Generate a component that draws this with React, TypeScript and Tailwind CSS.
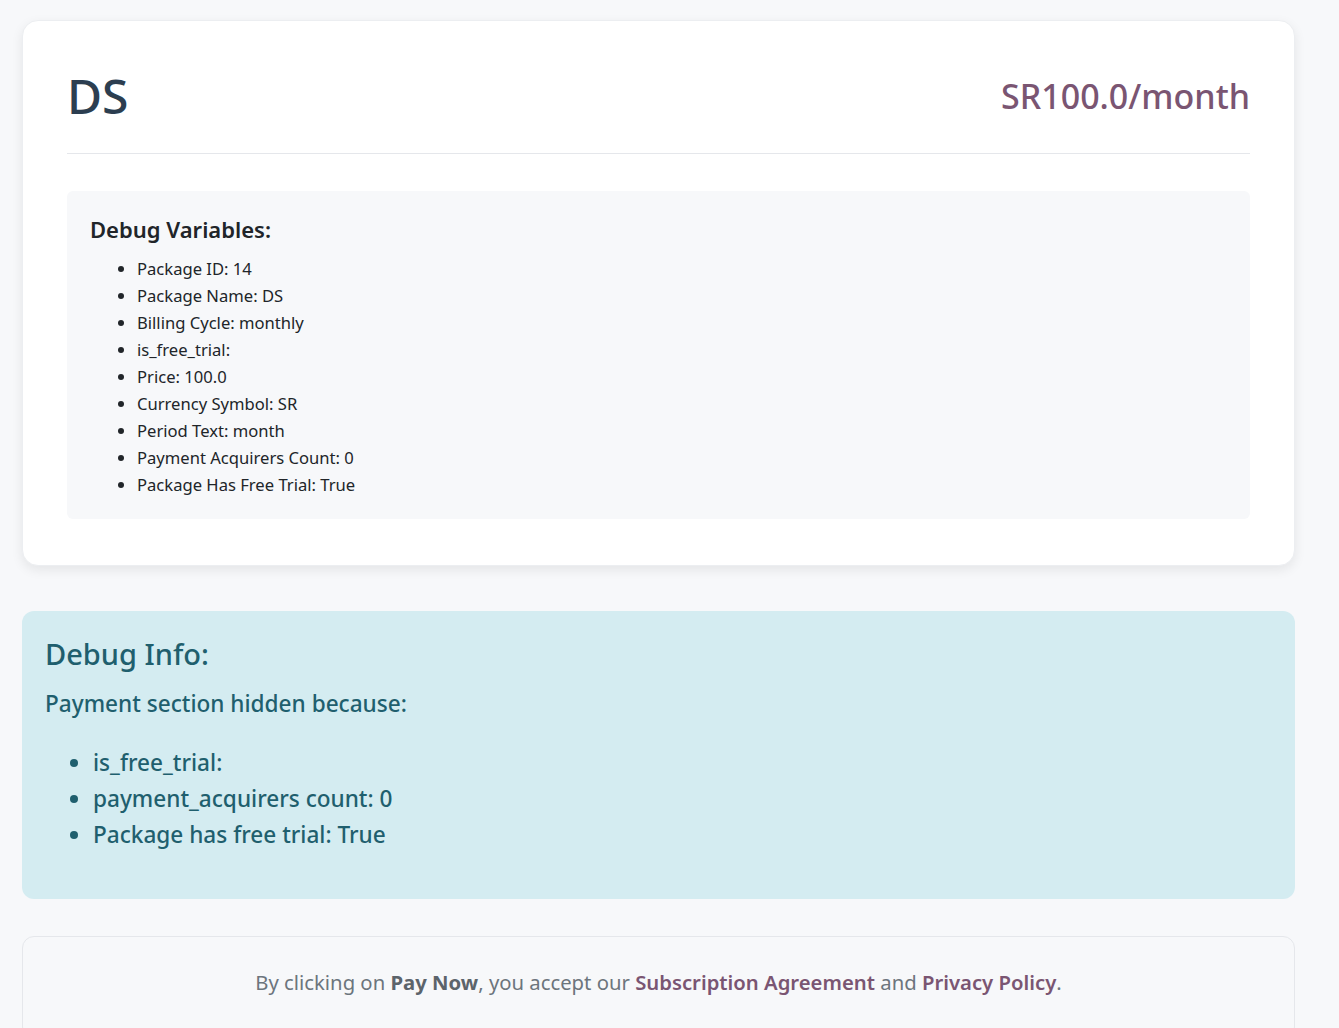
import React from "react";

const debugVars = [
  "Package ID: 14",
  "Package Name: DS",
  "Billing Cycle: monthly",
  "is_free_trial:",
  "Price: 100.0",
  "Currency Symbol: SR",
  "Period Text: month",
  "Payment Acquirers Count: 0",
  "Package Has Free Trial: True",
];

const hiddenReasons = [
  "is_free_trial:",
  "payment_acquirers count: 0",
  "Package has free trial: True",
];

export default function App() {
  return (
    <div className="min-h-screen bg-[#f7f8fa] pt-[20px] font-['Noto_Sans',sans-serif]">
      <div className="ml-[22px] w-[1273px]">
        {/* Package card */}
        <div className="rounded-2xl border border-[#eceef1] bg-white px-[44px] pt-[42px] pb-[46px] shadow-[0_4px_12px_rgba(0,0,0,0.08)]">
          <div className="flex items-center justify-between border-b border-[#e5e7eb] pb-[24px]">
            <h1 className="text-[48px] leading-[66px] font-medium text-[#2c3e50]">DS</h1>
            <div className="text-[34px] leading-[48px] font-medium text-[#7a5572]">SR100.0/month</div>
          </div>

          {/* Debug Variables */}
          <div className="mt-[37px] rounded-md bg-[#f7f8fa] px-[23px] pt-[22px] pb-[21px]">
            <h3 className="mb-[10px] text-[22px] leading-[32px] font-semibold text-[#212529]">
              Debug Variables:
            </h3>
            <ul className="list-disc pl-[47px] text-[16.6px] leading-[27px] text-[#212529]">
              {debugVars.map((v) => (
                <li key={v}>{v}</li>
              ))}
            </ul>
          </div>
        </div>

        {/* Debug info alert */}
        <div className="mt-[45px] rounded-xl bg-[#d4ecf1] px-[23px] pt-[23px] pb-[46px] text-[#1f5f6e]">
          <h4 className="text-[29px] leading-[40px] font-medium">Debug Info:</h4>
          <p className="mt-[14px] text-[22.6px] leading-[32px] font-medium">Payment section hidden because:</p>
          <ul className="mt-[25px] list-disc pl-[48px] text-[22.6px] leading-[36px] font-medium">
            {hiddenReasons.map((r) => (
              <li key={r}>{r}</li>
            ))}
          </ul>
        </div>

        {/* Terms footer */}
        <div className="mt-[37px] rounded-xl border border-[#e5e7eb] bg-[#f7f8fa] pt-[29px] pb-[40px] text-center text-[20.3px] leading-[32px] text-[#6c757d]">
          By clicking on <span className="font-bold text-[#5c646b]">Pay Now</span>, you accept our{" "}
          <a href="#" className="font-semibold text-[#7a5572]">Subscription Agreement</a> and{" "}
          <a href="#" className="font-semibold text-[#7a5572]">Privacy Policy</a>.
        </div>
      </div>
    </div>
  );
}
